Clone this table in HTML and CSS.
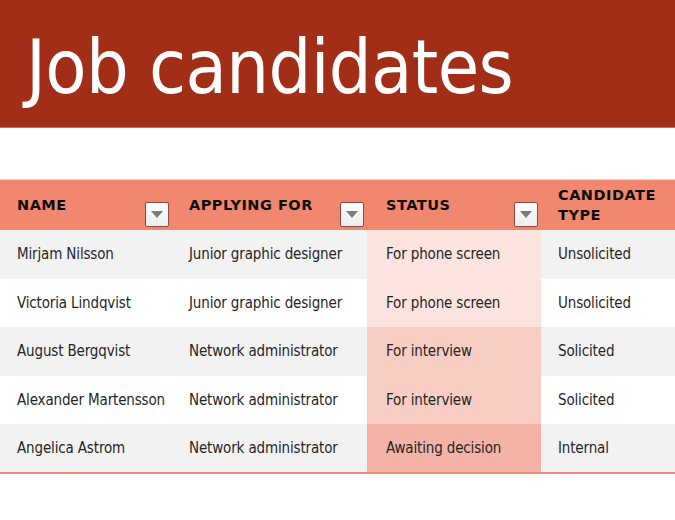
FILE: index.html
```html
<!DOCTYPE html>
<html>
<head>
<meta charset="utf-8">
<link rel="stylesheet" href="styles.css">
</head>
<body>
<header class="banner"><h1 class="title">Job candidates</h1></header>
<table class="grid">
  <colgroup><col class="c1"><col class="c2"><col class="c3"><col class="c4"></colgroup>
  <thead>
    <tr>
      <th><span class="hd">NAME</span><span class="dd"><svg width="12" height="7" viewBox="0 0 12 7"><path d="M0 0H12L6 7Z" fill="#7a7a7a"/></svg></span></th>
      <th><span class="hd">APPLYING FOR</span><span class="dd"><svg width="12" height="7" viewBox="0 0 12 7"><path d="M0 0H12L6 7Z" fill="#7a7a7a"/></svg></span></th>
      <th class="hs"><span class="hd">STATUS</span><span class="dd"><svg width="12" height="7" viewBox="0 0 12 7"><path d="M0 0H12L6 7Z" fill="#7a7a7a"/></svg></span></th>
      <th><span class="hd">CANDIDATE<br>TYPE</span></th>
    </tr>
  </thead>
  <tbody>
    <tr class="odd"><td>Mirjam Nilsson</td><td>Junior graphic designer</td><td class="s1">For phone screen</td><td>Unsolicited</td></tr>
    <tr><td>Victoria Lindqvist</td><td>Junior graphic designer</td><td class="s1">For phone screen</td><td>Unsolicited</td></tr>
    <tr class="odd"><td>August Bergqvist</td><td>Network administrator</td><td class="s2">For interview</td><td>Solicited</td></tr>
    <tr><td>Alexander Martensson</td><td>Network administrator</td><td class="s2">For interview</td><td>Solicited</td></tr>
    <tr class="odd last"><td>Angelica Astrom</td><td>Network administrator</td><td class="s3">Awaiting decision</td><td>Internal</td></tr>
  </tbody>
</table>
</body>
</html>
```
FILE: styles.css
```css
html, body { margin: 0; padding: 0; background: #fff; }
body { font-family: "DejaVu Sans Condensed", "DejaVu Sans", sans-serif; color: #262626; width: 675px; }
.banner { background: #a22e18; height: 128px; box-sizing: border-box; padding: 8px 0 0 26px; border-bottom: 1px solid #c4705f; }
.title { margin: 0; color: #fff; font-weight: normal; font-size: 75px; line-height: 118px; letter-spacing: -0.6px; }
.grid { margin-top: 51px; width: 675px; border-collapse: collapse; table-layout: fixed; }
.c1 { width: 172px; } .c2 { width: 195px; } .c3 { width: 174px; } .c4 { width: 134px; }
th { background: #f0876e; height: 49px; padding: 0 0 1px 17px; text-align: left; position: relative; font-family: "DejaVu Sans", sans-serif; font-size: 14.5px; font-weight: bold; color: #0d0d0d; line-height: 20px; border-top: 1px solid #f6cfc6; letter-spacing: 0.5px; }
th.hs { padding-left: 19px; }
.dd { position: absolute; right: 3px; bottom: 3px; width: 22px; height: 23px; border: 1px solid #8a4a40; border-radius: 2px; background: linear-gradient(#fff, #ececec); display: flex; align-items: center; justify-content: center; }
td { height: 48.6px; padding: 0 0 0 17px; font-size: 15px; box-sizing: border-box; white-space: nowrap; letter-spacing: -0.15px; }
tr.odd td { background: #f2f2f2; }
td.s1, td.s2, td.s3 { padding-left: 19px; }
td.s1 { background: #fbe3de !important; }
td.s2 { background: #f8cdc3 !important; }
td.s3 { background: #f4b3a5 !important; }
tr.last td { border-bottom: 2px solid #ef8c77; }
```
